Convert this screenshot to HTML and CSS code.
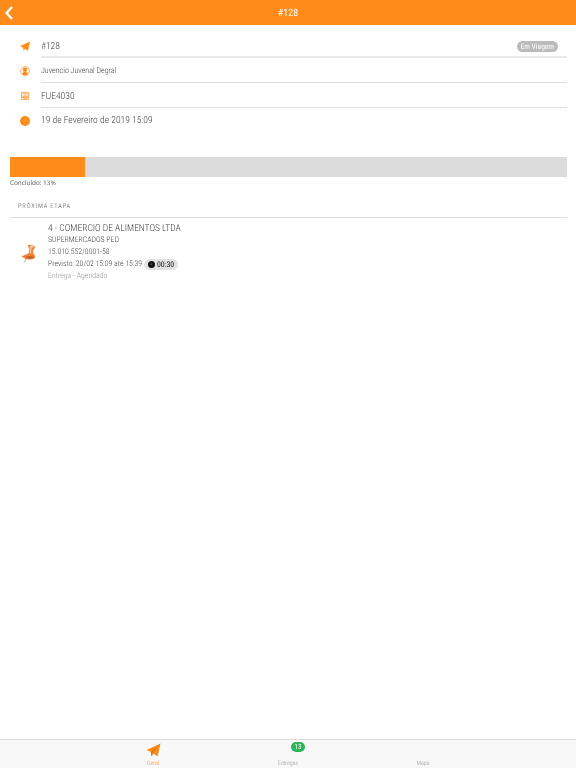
FILE: index.html
```html
<!DOCTYPE html>
<html lang="pt-BR">
<head>
    <meta charset="UTF-8">
    <meta name="viewport" content="width=device-width, initial-scale=1.0">
    <title>#128</title>
    <link rel="stylesheet" href="styles.css">
</head>
<body>

    <div class="app">
        <header class="topbar">
            <svg class="back-icon" width="10" height="16" viewBox="0 0 10 16">
                <path d="M8 2 L2.5 8 L8 14" fill="none" stroke="#fff" stroke-width="2.4"/>
            </svg>
            <span class="topbar-title">#128</span>
        </header>

        <!-- Trip details -->
        <section class="details">
            <div class="detail-row row-trip">
                <svg class="detail-icon" width="12" height="12" viewBox="0 0 12 12">
                    <path d="M11 1.5 L8.8 11 L6 8.8 L4.6 10.8 L4.2 7.8 L1 6.2 Z" fill="#ff8c1a"/>
                </svg>
                <div class="detail-body">
                    <span class="text-md">#128</span>
                    <span class="status-pill">Em Viagem</span>
                </div>
            </div>
            <div class="detail-row row-driver">
                <svg class="detail-icon" width="12" height="12" viewBox="0 0 12 12">
                    <circle cx="6" cy="6" r="4.4" fill="#fff" stroke="#ffb26b" stroke-width="1"/>
                    <circle cx="6" cy="4.6" r="2.2" fill="#ff8c1a"/>
                    <path d="M3 9.6 L4.6 6.4 H7.4 L9 9.6 Q6 11.2 3 9.6 Z" fill="#ff8c1a"/>
                </svg>
                <div class="detail-body">
                    <span class="text-sm">Juvencio Juvenal Degral</span>
                </div>
            </div>
            <div class="detail-row row-plate">
                <svg class="detail-icon" width="12" height="12" viewBox="0 0 12 12">
                    <path d="M2 2 H10 V10 H2 Z" fill="#ffb26b"/>
                    <path d="M3 3.4 H5.6 V6 H3 Z M6.4 3.4 H9 V6 H6.4 Z" fill="#ffe3c9"/>
                    <path d="M3 8 H4.4 V9 H3 Z M7.6 8 H9 V9 H7.6 Z" fill="#fff"/>
                </svg>
                <div class="detail-body">
                    <span class="text-md">FUE4030</span>
                </div>
            </div>
            <div class="detail-row row-date">
                <svg class="detail-icon" width="12" height="12" viewBox="0 0 12 12">
                    <circle cx="6" cy="6" r="5" fill="#ff8c1a"/>
                    <path d="M6.4 3.6 V6.6 H4.2" fill="none" stroke="#ffb26b" stroke-width="0.7"/>
                </svg>
                <div class="detail-body">
                    <span class="text-md">19 de Fevereiro de 2019 15:09</span>
                </div>
            </div>
        </section>

        <!-- Progress -->
        <section class="progress">
            <div class="progress-track">
                <div class="progress-fill" style="width: 13.5%"></div>
            </div>
            <div class="progress-label">Concluído: 13%</div>
        </section>

        <!-- Next stop -->
        <section class="next-stop">
            <h3 class="section-title">PRÓXIMA ETAPA</h3>
            <div class="stop">
                <svg class="pin-icon" width="20" height="22" viewBox="0 0 20 22">
                    <path d="M5 18.5 L8 14" stroke="#a9a9a9" stroke-width="1"/>
                    <path d="M9 1 Q13 0 16 2.5 Q16.5 4.5 14.5 5.5 L14 9 Q16.5 11 16 13.5 Q15 15.5 10 15.5 Q5 15 2.5 12.5 Q5 11 9.5 9.5 L10.5 5 Q8.5 3 9 1 Z" fill="#f0853c"/>
                    <path d="M10.5 2 Q13 1 15 2.5 L12.5 4.5 L12 9 L10.6 9.6 L11.4 4.4 Z" fill="#fbc9a1"/>
                    <path d="M6 13 Q11 11 15.5 13 Q13 15.5 10 15 Z" fill="#c9642a"/>
                </svg>
                <div class="stop-body">
                    <div class="stop-name">4 - COMERCIO DE ALIMENTOS LTDA</div>
                    <div class="stop-line">SUPERMERCADOS PED</div>
                    <div class="stop-line">15.010.552/0001-58</div>
                    <div class="stop-line stop-eta">
                        <span>Previsto: 20/02 15:09 até 15:39</span>
                        <span class="duration-pill">
                            <svg width="7" height="7" viewBox="0 0 7 7">
                                <circle cx="3.5" cy="3.5" r="3.5" fill="#111"/>
                                <path d="M3.7 1.6 V3.7 H2.3" fill="none" stroke="#777" stroke-width="0.6"/>
                            </svg>
                            00:30
                        </span>
                    </div>
                    <div class="stop-line stop-status">Entrega - Agendado</div>
                </div>
            </div>
        </section>

        <!-- Bottom tabs -->
        <nav class="tabbar">
            <div class="tab tab-active">
                <svg class="tab-icon" width="15" height="14" viewBox="0 0 15 14">
                    <path d="M14.5 0.5 L11.5 13.5 L7.5 10.5 L5.5 13.5 L4.8 9 L0.5 7 Z" fill="#ff8c1a"/>
                    <path d="M14.5 0.5 L4.8 9 L5.5 13.5 L6.6 9.8 Z" fill="#e67510"/>
                </svg>
                <span class="tab-label">Geral</span>
            </div>
            <div class="tab">
                <span class="tab-badge">13</span>
                <span class="tab-label">Entregas</span>
            </div>
            <div class="tab">
                <span class="tab-spacer"></span>
                <span class="tab-label">Mapa</span>
            </div>
        </nav>
    </div>

</body>
</html>
```

FILE: styles.css
```css
* {
    box-sizing: border-box;
}

html, body {
    margin: 0;
    height: 100%;
}

body {
    font-family: Roboto, "Liberation Sans", sans-serif;
    font-weight: 300;
    font-stretch: 75%;
    background-color: #fff;
    color: #444;
    text-rendering: geometricPrecision;
}

.app {
    height: 768px;
    display: flex;
    flex-direction: column;
    will-change: transform;
}

.topbar {
    height: 25px;
    flex-shrink: 0;
    background-color: #ff8c1a;
    position: relative;
    display: flex;
    align-items: center;
    justify-content: center;
    padding-top: 1px;
}

.back-icon {
    position: absolute;
    left: 4px;
    top: 5px;
}

.topbar-title {
    color: #fff;
    font-size: 10px;
    font-weight: 400;
}

.details {
    padding-top: 9px;
}

.detail-row {
    display: flex;
    padding-left: 19px;
    padding-right: 9px;
}

.detail-icon {
    flex-shrink: 0;
    align-self: center;
    margin-right: 10px;
}

.detail-body {
    flex: 1;
    display: flex;
    align-items: center;
    justify-content: space-between;
    padding-right: 9px;
    border-bottom: 1px solid #ddd;
}

.row-trip .detail-body {
    height: 24px;
    border-bottom: 2px solid #e9e9e9;
    padding-top: 2px;
}

.row-driver .detail-body {
    height: 25px;
}

.row-plate .detail-body {
    height: 25px;
    padding-top: 2px;
}

.row-date .detail-body {
    height: 25px;
    border-bottom: none;
}

.text-md {
    font-size: 9.6px;
}

.text-sm {
    font-size: 8px;
}

.status-pill {
    background-color: #bbb;
    color: #fff;
    font-size: 7.5px;
    font-weight: 400;
    line-height: 11px;
    padding: 0 4px;
    border-radius: 6px;
}

.progress {
    padding: 24px 9px 0 10px;
}

.progress-track {
    height: 20px;
    background-color: #dcdcdc;
}

.progress-fill {
    height: 100%;
    background-color: #ff8c1a;
}

.progress-label {
    font-family: "Open Sans", sans-serif;
    font-stretch: normal;
    font-size: 6.4px;
    font-weight: 400;
    line-height: 10px;
    color: #555;
    margin-top: 1px;
}

.next-stop {
    padding: 0 9px 0 10px;
}

.section-title {
    margin: 0;
    height: 30px;
    padding: 13px 0 0 8px;
    font-size: 6.5px;
    line-height: 10px;
    font-weight: 300;
    letter-spacing: 0.8px;
    color: #555;
    border-bottom: 1px solid #ddd;
}

.stop {
    display: flex;
    align-items: center;
    padding-top: 5px;
}

.pin-icon {
    width: 38px;
    flex-shrink: 0;
    margin-top: 5px;
}

.stop-name {
    font-size: 9.5px;
    line-height: 11px;
}

.stop-line {
    font-size: 7.8px;
    line-height: 12px;
}

.stop-eta {
    display: flex;
    align-items: center;
    gap: 2px;
}

.duration-pill {
    display: inline-flex;
    align-items: center;
    gap: 2px;
    background-color: #e2e2e2;
    color: #111;
    border-radius: 6px;
    padding: 0 4px;
    line-height: 11px;
    font-weight: 400;
}

.stop-status {
    color: #999;
}

.tabbar {
    margin-top: auto;
    height: 29px;
    flex-shrink: 0;
    background-color: #f8f8f8;
    border-top: 1px solid #ddd;
    display: flex;
    justify-content: center;
}

.tab {
    width: 135px;
    display: flex;
    flex-direction: column;
    align-items: center;
    color: #999;
}

.tab-icon {
    display: block;
    margin-top: 3px;
    height: 14px;
}

.tab-badge {
    margin: 2px 0 5px 20px;
    height: 10px;
    width: 14px;
    border-radius: 5px;
    background-color: #2fb457;
    color: #fff;
    font-size: 7px;
    font-weight: 400;
    line-height: 10px;
    text-align: center;
}

.tab-spacer {
    height: 17px;
}

.tab-label {
    font-size: 6px;
    line-height: 8px;
    margin-top: 3px;
}

.tab-active {
    color: #ff8c1a;
}
```
